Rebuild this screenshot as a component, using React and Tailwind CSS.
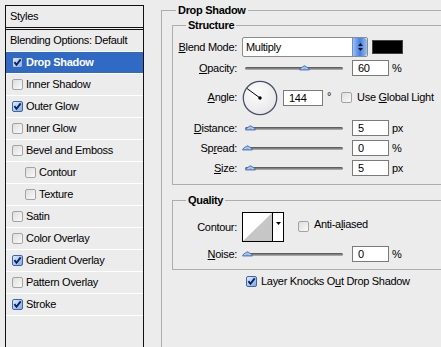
import React from 'react';

const styles = [
  { name: 'Drop Shadow', on: true, sel: true },
  { name: 'Inner Shadow' },
  { name: 'Outer Glow', on: true },
  { name: 'Inner Glow' },
  { name: 'Bevel and Emboss' },
  { name: 'Contour', sub: true },
  { name: 'Texture', sub: true },
  { name: 'Satin' },
  { name: 'Color Overlay' },
  { name: 'Gradient Overlay', on: true },
  { name: 'Pattern Overlay' },
  { name: 'Stroke', on: true },
];

const U = ({ children }) => <span className="underline underline-offset-[1px]">{children}</span>;

const Box = ({ checked, className = '' }) => (
  <svg width="11" height="11" viewBox="0 0 11 11" className={`shrink-0 ${className}`}>
    <defs>
      <linearGradient id="boxOn" x1="0" y1="0" x2="1" y2="1">
        <stop offset="0" stopColor="#e6effc" />
        <stop offset="1" stopColor="#7fa6e2" />
      </linearGradient>
      <linearGradient id="boxOff" x1="0" y1="0" x2="1" y2="1">
        <stop offset="0" stopColor="#dcdcdc" />
        <stop offset="1" stopColor="#fbfbfb" />
      </linearGradient>
    </defs>
    <rect x="0.5" y="0.5" width="10" height="10" rx="1.5"
      fill={checked ? 'url(#boxOn)' : 'url(#boxOff)'}
      stroke={checked ? '#3c66a8' : '#a3a3a3'} />
    {checked && <path d="M2.4 5.2 L4.5 7.8 L8.7 2.4" fill="none" stroke="#0b2461" strokeWidth="1.9" />}
  </svg>
);

const Thumb = ({ className }) => (
  <svg width="11" height="6" viewBox="0 0 11 6" className={`absolute top-[-1.5px] ${className}`}>
    <path d="M0.5 5 Q0.5 3 5.5 0.7 Q10.5 3 10.5 5 Z" fill="#7d9fd9" stroke="#4a6fae" strokeWidth="0.8" />
    <path d="M2.5 3.6 Q5.5 1.8 8.5 3.6" fill="none" stroke="#d6e3f8" strokeWidth="1" />
  </svg>
);

const Field = ({ children, className = '' }) => (
  <div className={`h-[16px] border border-[#7b7b7b] bg-white pl-[5px] leading-[14px] ${className}`}>{children}</div>
);

const Label = ({ children }) => (
  <span className="w-[59px] shrink-0 text-right whitespace-nowrap">{children}</span>
);

const SliderRow = ({ label, thumb, value, unit, className }) => (
  <div className={`flex items-center h-[16px] ${className}`}>
    <Label>{label}</Label>
    <div className="relative ml-[8px] w-[98px] h-[3px] rounded-full bg-gradient-to-b from-[#4e4e4e] to-[#b9b9b9]">
      <Thumb className={thumb} />
    </div>
    <Field className="ml-[9px] w-[37px]">{value}</Field>
    <span className="ml-[3px]">{unit}</span>
  </div>
);

export default function App() {
  return (
    <div className="w-[441px] h-[347px] overflow-hidden bg-[#ececec] flex text-[11px] leading-[13px] text-black tracking-[-0.3px] font-['Liberation_Sans',Arial,sans-serif]">
      {/* styles list */}
      <div className="ml-[5px] mt-[5px] w-[139px] h-[360px] shrink-0 border border-b-0 border-[#111] flex flex-col">
        <div className="h-[22px] flex items-center pl-[4px] border-b border-[#111]">Styles</div>
        <div className="mt-[1px] border-t border-[#111]">
          <div className="h-[22px] flex items-center pl-[4px] border-b border-white">Blending Options: Default</div>
          {styles.map(s => (
            <div key={s.name}
              className={`h-[22px] flex items-center gap-[3px] border-b border-white ${s.sub ? 'pl-[19px]' : 'pl-[6px]'} ${s.sel ? 'bg-[#316ac5] text-white font-bold' : ''}`}>
              <Box checked={s.on} />
              <span>{s.name}</span>
            </div>
          ))}
        </div>
      </div>

      {/* drop shadow options */}
      <fieldset className="mt-[4px] ml-[17px] w-[330px] min-w-0 h-[400px] shrink-0 border border-[#adadad] pl-[10px]">
        <legend className="ml-[4px] px-[2px] font-bold leading-[13px]">Drop Shadow</legend>

        <fieldset className="mt-[2px] w-[330px] min-w-0 border border-[#adadad] pl-[5px] pt-[5px] pb-[8px]">
          <legend className="ml-[8px] px-[2px] font-bold leading-[13px]">Structure</legend>

          <div className="flex items-center h-[20px]">
            <Label><U>B</U>lend Mode:</Label>
            <div className="ml-[5px] w-[126px] h-[20px] flex items-center border border-[#8b8b8b] rounded-[2px] bg-white overflow-hidden">
              <span className="flex-1 pl-[3px]">Multiply</span>
              <div className="w-[15px] h-full flex flex-col items-center justify-center gap-[2px] rounded-r-[3px] bg-gradient-to-r from-[#9fbdf0] via-[#3f7fe3] to-[#9fbdf0] border-l border-[#6d8fc7]">
                <svg width="5" height="3" viewBox="0 0 5 3"><path d="M0 3 L2.5 0 L5 3 Z" fill="#111" /></svg>
                <svg width="5" height="3" viewBox="0 0 5 3"><path d="M0 0 L2.5 3 L5 0 Z" fill="#111" /></svg>
              </div>
            </div>
            <div className="ml-[4px] w-[31px] h-[14px] bg-black border border-[#444]" />
          </div>

          <SliderRow className="mt-[3px]" label={<><U>O</U>pacity:</>} thumb="left-[54px]" value="60" unit="%" />

          <div className="mt-[4px] flex items-center h-[35px]">
            <Label><U>A</U>ngle:</Label>
            <svg width="36" height="36" viewBox="0 0 36 36" className="ml-[5px] shrink-0">
              <defs>
                <radialGradient id="dial" cx="0.4" cy="0.35" r="0.7">
                  <stop offset="0" stopColor="#fdfdfd" />
                  <stop offset="1" stopColor="#e6e6e6" />
                </radialGradient>
              </defs>
              <circle cx="18" cy="18" r="16.7" fill="url(#dial)" stroke="#46526b" strokeWidth="1.3" />
              <line x1="18" y1="18" x2="5.1" y2="8.6" stroke="#000" strokeWidth="1" />
              <circle cx="18" cy="18" r="1.7" fill="#000" />
            </svg>
            <Field className="ml-[5px] w-[40px]">144</Field>
            <span className="ml-[4px] self-start mt-[10px]">°</span>
            <Box className="ml-[10px]" />
            <span className="ml-[5px]">Use <U>G</U>lobal Light</span>
          </div>

          <SliderRow className="mt-[5px]" label={<><U>D</U>istance:</>} thumb="left-[0px]" value="5" unit="px" />
          <SliderRow className="mt-[4px]" label={<>Sp<U>r</U>ead:</>} thumb="left-[-3px]" value="0" unit="%" />
          <SliderRow className="mt-[4px]" label={<><U>S</U>ize:</>} thumb="left-[0px]" value="5" unit="px" />
        </fieldset>

        <fieldset className="mt-[9px] w-[330px] min-w-0 border border-[#adadad] pl-[5px] pt-[5px] pb-[7px]">
          <legend className="ml-[8px] px-[2px] font-bold leading-[13px]">Quality</legend>

          <div className="flex items-center h-[30px]">
            <Label>Contour:</Label>
            <div className="ml-[5px] flex h-[30px] border border-black bg-white">
              <svg width="29" height="28" viewBox="0 0 29 28">
                <path d="M0 28 L29 0 L29 28 Z" fill="#c6c6c6" />
              </svg>
              <div className="w-[11px] border-l border-black flex justify-center pt-[9px]">
                <svg width="5" height="3" viewBox="0 0 5 3"><path d="M0 0 L2.5 3 L5 0 Z" fill="#000" /></svg>
              </div>
            </div>
            <div className="self-start mt-[9px] ml-[14px] flex items-center h-[11px]">
              <Box />
              <span className="ml-[5px] mt-[-4px]">Anti-a<U>l</U>iased</span>
            </div>
          </div>

          <SliderRow className="mt-[4px]" label={<><U>N</U>oise:</>} thumb="left-[-3px]" value="0" unit="%" />
        </fieldset>

        <div className="mt-[5px] h-[13px] flex items-center ml-[74px]">
          <Box checked />
          <span className="ml-[4px]">Layer Knocks O<U>u</U>t Drop Shadow</span>
        </div>
      </fieldset>
    </div>
  );
}
